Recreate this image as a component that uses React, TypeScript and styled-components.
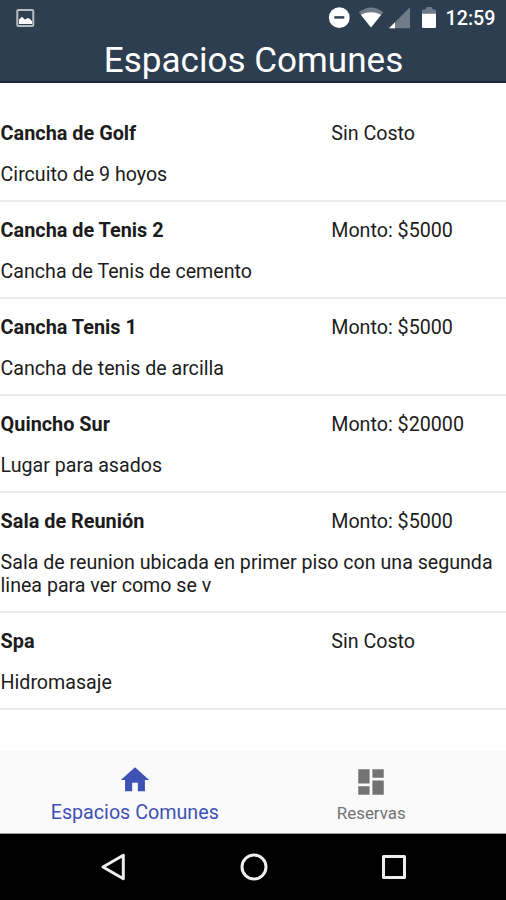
import React from "react";
import styled, { createGlobalStyle } from "styled-components";

const GlobalStyle = createGlobalStyle`
  html, body { margin: 0; padding: 0; background: #fff; }
  * { box-sizing: border-box; }
`;

const Screen = styled.div`
  display: flex;
  flex-direction: column;
  width: 506px;
  height: 900px;
  overflow: hidden;
  background: #fff;
  color: #1c1c1c;
  font-family: Roboto, "Liberation Sans", sans-serif;
  font-size: 19.7px;
  line-height: 23px;
`;

const Header = styled.header`
  height: 83px;
  flex: none;
  background: #2c3e50;
  border-bottom: 2px solid #15253f;
  color: #fff;
`;

const StatusBar = styled.div`
  display: flex;
  align-items: center;
  justify-content: space-between;
  height: 36px;
  padding: 0 10.5px 0 16px;
`;

const StatusIcons = styled.div`
  display: flex;
  align-items: center;
`;

const Clock = styled.span`
  margin-left: 7.5px;
  font-size: 19.7px;
  font-weight: 500;
  white-space: nowrap;
`;

const Title = styled.h1`
  margin: 0;
  padding-left: 1px;
  font-size: 35.1px;
  font-weight: 400;
  line-height: 48px;
  text-align: center;
`;

const List = styled.main`
  flex: 1;
  padding-top: 22px;
`;

const Row = styled.article`
  padding: 17px 0 14px 0.6px;
  border-bottom: 2px solid #ececec;
`;

const RowHead = styled.div`
  display: flex;
  margin-bottom: 18px;
`;

const Name = styled.h2`
  flex: none;
  width: 330.6px;
  margin: 0;
  font-size: 19.85px;
  font-weight: 700;
`;

const Price = styled.span``;

const Description = styled.p`
  margin: 0;
  font-size: 19.62px;
`;

const Tabs = styled.nav`
  display: flex;
  flex: none;
  justify-content: center;
  height: 83px;
  background: #fafafa;
  border-bottom: 1px solid #999;
`;

const Tab = styled.div<{ $active?: boolean }>`
  display: flex;
  flex-direction: column;
  align-items: center;
  width: 236.5px;
  padding-top: ${(p) => (p.$active ? 12 : 14)}px;
  color: ${(p) => (p.$active ? "#3f51b5" : "#737373")};
  font-size: ${(p) => (p.$active ? 19.7 : 16.9)}px;
  svg { margin-bottom: ${(p) => (p.$active ? 4 : 3)}px; }
`;

const SystemNav = styled.div`
  display: flex;
  flex: none;
  justify-content: space-between;
  align-items: center;
  height: 66px;
  padding: 0 95px 0 96px;
  background: #000;
`;

const spaces = [
  { name: "Cancha de Golf", price: "Sin Costo", text: "Circuito de 9 hoyos" },
  { name: "Cancha de Tenis 2", price: "Monto: $5000", text: "Cancha de Tenis de cemento" },
  { name: "Cancha Tenis 1", price: "Monto: $5000", text: "Cancha de tenis de arcilla" },
  { name: "Quincho Sur", price: "Monto: $20000", text: "Lugar para asados" },
  {
    name: "Sala de Reunión",
    price: "Monto: $5000",
    text: "Sala de reunion ubicada en primer piso con una segunda linea para ver como se v",
  },
  { name: "Spa", price: "Sin Costo", text: "Hidromasaje" },
];

const PictureIcon = () => (
  <svg width="19" height="19" viewBox="0 0 19 19">
    <rect x="1.3" y="1.1" width="16" height="15.8" rx="1" fill="none" stroke="#b9bdc2" strokeWidth="2" />
    <path d="M3 15V10.5L6 7.8l3 3 2-1.5 2 0 3 2.7v3z" fill="#fff" />
  </svg>
);

const StatusGlyphs = () => (
  <svg width="110" height="24" viewBox="0 0 110 24">
    <circle cx="11.3" cy="11.7" r="10.4" fill="#fff" />
    <rect x="6.3" y="10.2" width="10" height="2.4" fill="#2c3e50" />
    <path d="M30.8 6.2Q43-3.3 55.3 6.2L43 21.5z" fill="#6f7b87" />
    <path d="M32.8 8.7Q43 4 53.2 8.7L43 21.5z" fill="#fff" />
    <path d="M61 22.3L82 1.3v21z" fill="#6f7b87" />
    <path d="M61 22.3l6-6v6z" fill="#fff" />
    <path d="M94 8V5q0-1.4 1.4-1.4h2.1L99 1h4.5l1.5 2.6h1.6q1.4 0 1.4 1.4v3z" fill="#6f7b87" />
    <path d="M94 7.8h14v12.9q0 1.3-1.3 1.3h-11.4q-1.3 0-1.3-1.3z" fill="#fff" />
  </svg>
);

const HomeIcon = () => (
  <svg width="34" height="34" viewBox="0 0 24 24" fill="currentColor">
    <path d="M10 20v-6h4v6h5v-8h3L12 3 2 12h3v8z" />
  </svg>
);

const DashboardIcon = () => (
  <svg width="34" height="34" viewBox="0 0 24 24" fill="currentColor">
    <path d="M3 13h8V3H3v10zm0 8h8v-6H3v6zm10 0h8V11h-8v10zm0-18v6h8V3h-8z" />
  </svg>
);

const BackIcon = () => (
  <svg width="34" height="34" viewBox="0 0 34 34" fill="none" stroke="#eee" strokeWidth="3" strokeLinejoin="round">
    <path d="M7 17L27.3 5.2v23.6z" />
  </svg>
);

const CircleIcon = () => (
  <svg width="34" height="34" viewBox="0 0 34 34" fill="none" stroke="#eee" strokeWidth="3">
    <circle cx="17" cy="17" r="12" />
  </svg>
);

const SquareIcon = () => (
  <svg width="34" height="34" viewBox="0 0 34 34" fill="none" stroke="#eee" strokeWidth="3" strokeLinejoin="round">
    <rect x="6.5" y="6.5" width="21" height="21" />
  </svg>
);

export default function App() {
  return (
    <Screen>
      <GlobalStyle />
      <Header>
        <StatusBar>
          <PictureIcon />
          <StatusIcons>
            <StatusGlyphs />
            <Clock>12:59</Clock>
          </StatusIcons>
        </StatusBar>
        <Title>Espacios Comunes</Title>
      </Header>
      <List>
        {spaces.map((s) => (
          <Row key={s.name}>
            <RowHead>
              <Name>{s.name}</Name>
              <Price>{s.price}</Price>
            </RowHead>
            <Description>{s.text}</Description>
          </Row>
        ))}
      </List>
      <Tabs>
        <Tab $active>
          <HomeIcon />
          <span>Espacios Comunes</span>
        </Tab>
        <Tab>
          <DashboardIcon />
          <span>Reservas</span>
        </Tab>
      </Tabs>
      <SystemNav>
        <BackIcon />
        <CircleIcon />
        <SquareIcon />
      </SystemNav>
    </Screen>
  );
}
